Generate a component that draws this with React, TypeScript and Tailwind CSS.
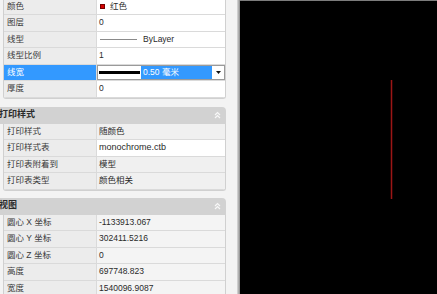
import type { ReactNode } from "react";
import clsx from "clsx";

const font = { fontFamily: '"Liberation Sans", "Noto Sans CJK SC", sans-serif' };

function Row({
  label,
  children,
  value = "bg-white",
  selected,
}: {
  label: string;
  children?: ReactNode;
  value?: string;
  selected?: boolean;
}) {
  return (
    <div className="flex h-[16.5px] border-b border-[#dadada]">
      <div
        className={clsx(
          "flex w-[93px] shrink-0 items-center justify-start border-r border-[#dadada] pl-[3px]",
          selected ? "bg-[#3399ff] text-white" : "bg-[#ececec] text-[#3a3a3a]",
        )}
      >
        {label}
      </div>
      <div className={clsx("flex min-w-0 flex-1 items-center pl-[2px] text-[#2a2a2a]", value)}>
        {children}
      </div>
    </div>
  );
}

function Header({ title }: { title: string }) {
  return (
    <div className="flex h-[17px] w-[226px] items-center justify-between rounded-tr-[4px] bg-[#d2d2d2] pr-[5px]">
      <span className="-ml-[1px] text-[9px] font-bold text-[#2b2b2b]">{title}</span>
      <svg width="7" height="8" viewBox="0 0 7 8" fill="none" stroke="#f7f7f7" strokeWidth="1.2">
        <path d="M1 4 L3.5 1.5 L6 4" />
        <path d="M1 7 L3.5 4.5 L6 7" />
      </svg>
    </div>
  );
}

function Section({ children }: { children: ReactNode }) {
  return (
    <div className="ml-[3px] w-[223px] overflow-hidden rounded-b-[3px] border-x border-b border-[#d0d0d0]">
      {children}
    </div>
  );
}

export default function App() {
  return (
    <div className="flex h-[294px] w-[437px] overflow-hidden text-[8.5px]" style={font}>
      <div className="flex w-[237px] shrink-0 flex-col overflow-hidden bg-[#f3f3f3]">
        <div className="-mt-[1.5px]">
          <Section>
            <Row label="颜色">
              <span className="mr-[5px] ml-[1px] h-[5px] w-[5px] border border-[#700] bg-[#d40000]" />
              红色
            </Row>
            <Row label="图层">0</Row>
            <Row label="线型">
              <span className="ml-[1px] h-px w-[37px] bg-[#8a8a8a]" />
              <span className="ml-[6px]">ByLayer</span>
            </Row>
            <Row label="线型比例">1</Row>
            <Row label="线宽" selected value="bg-white !pl-0">
              <div className="flex h-full flex-1 items-stretch border border-[#9a9a9a]">
                <div className="flex w-[43px] items-center pl-[1px]">
                  <span className="h-[3px] w-[41px] bg-black" />
                </div>
                <div className="flex flex-1 items-center bg-[#3399ff] pl-[2px] text-white">0.50 毫米</div>
                <div className="flex w-[12px] items-center justify-center bg-white">
                  <svg width="5" height="3" viewBox="0 0 5 3">
                    <path d="M0 0 H5 L2.5 3 Z" fill="#111" />
                  </svg>
                </div>
              </div>
            </Row>
            <Row label="厚度">0</Row>
          </Section>
        </div>

        <div className="mt-[8px]">
          <Header title="打印样式" />
          <Section>
            <Row label="打印样式" value="bg-[#f0f0f0]">随颜色</Row>
            <Row label="打印样式表" value="bg-white">
              <span className="text-[9px]">monochrome.ctb</span>
            </Row>
            <Row label="打印表附着到" value="bg-[#f0f0f0]">模型</Row>
            <Row label="打印表类型" value="bg-[#f0f0f0]">颜色相关</Row>
          </Section>
        </div>

        <div className="mt-[7px]">
          <Header title="视图" />
          <Section>
            <Row label="圆心 X 坐标" value="bg-[#f4f4f4]">-1133913.067</Row>
            <Row label="圆心 Y 坐标" value="bg-[#f4f4f4]">302411.5216</Row>
            <Row label="圆心 Z 坐标" value="bg-[#f4f4f4]">0</Row>
            <Row label="高度" value="bg-[#f4f4f4]">697748.823</Row>
            <Row label="宽度" value="bg-[#f4f4f4]">1540096.9087</Row>
          </Section>
        </div>
      </div>

      <div className="w-[3px] shrink-0 bg-gradient-to-r from-[#dcdcdc] to-[#8a8a8a]" />

      <div className="relative flex-1 border-t-[1.5px] border-[#7c7c7c] bg-black">
        <svg className="absolute inset-0 h-full w-full">
          <line x1="151.5" y1="79" x2="151.5" y2="198" stroke="#2a0404" strokeWidth="3" />
          <line x1="151.5" y1="79" x2="151.5" y2="198" stroke="#9a1616" strokeWidth="1" />
        </svg>
      </div>
    </div>
  );
}
